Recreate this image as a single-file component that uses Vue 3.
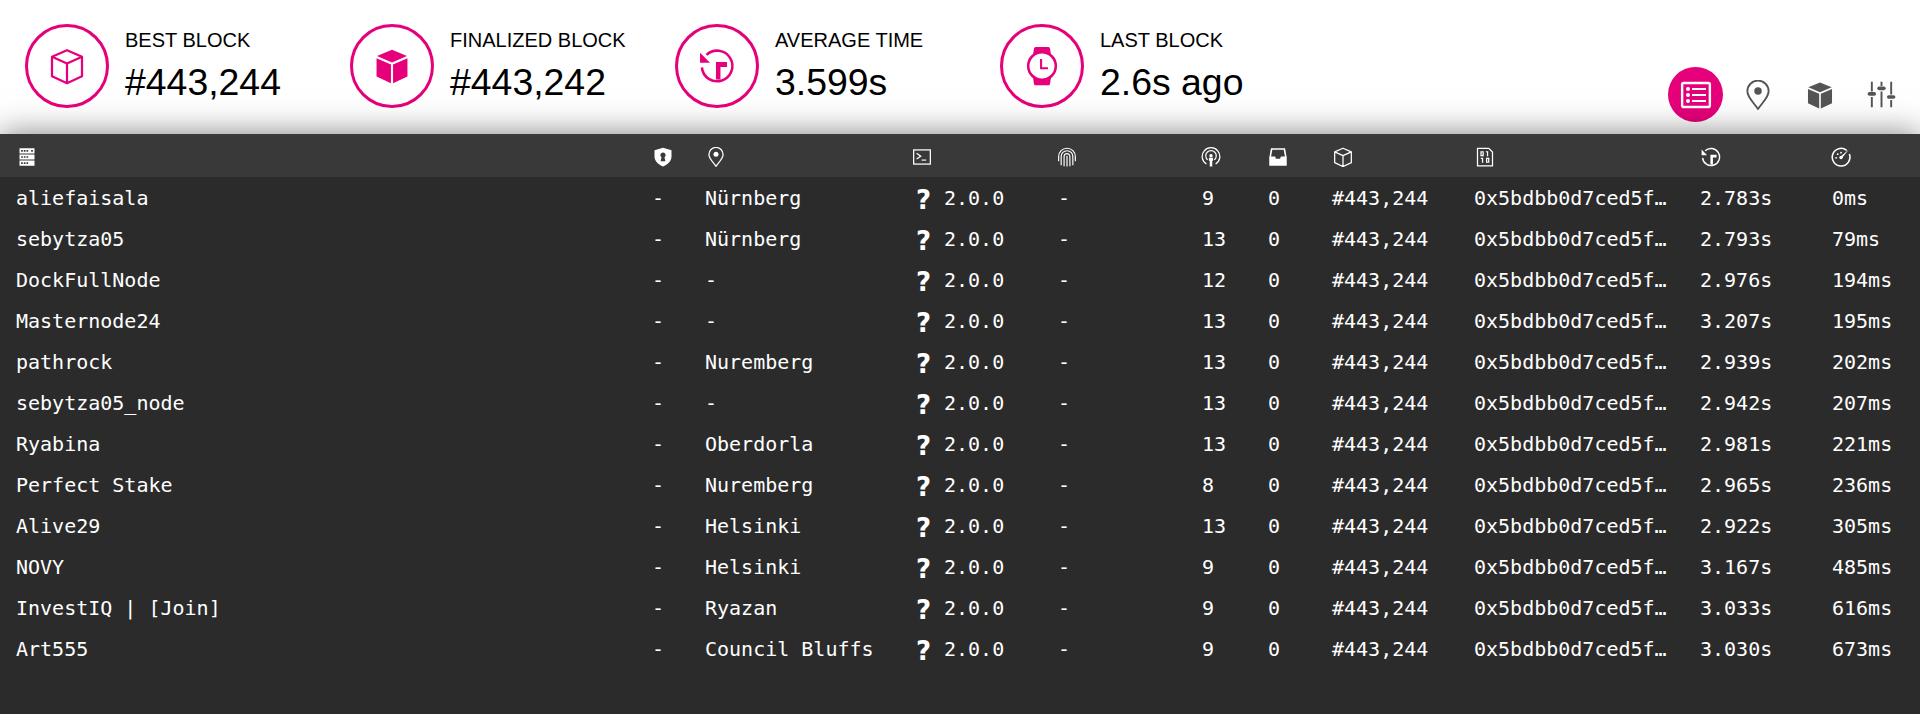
<script setup>
const icons = {
  cube: '<path d="M12 1.5 22 5.8V18.8L12 23.5 2 18.8V5.8ZM2 5.8 12 10.4 22 5.8M12 10.4V23.5" fill="none" stroke="currentColor" stroke-width="1.5" stroke-linejoin="round"/>',
  cubeSolid: '<path d="M12 1.2 22 5.4 12 9.7 2 5.4ZM1.7 6.8 11.3 11V23.5L1.7 19ZM22.3 6.8V19L12.7 23.5V11Z" fill="currentColor"/>',
  timer: '<path d="M5 4.6A10.2 10.2 0 1 1 1.9 13" fill="none" stroke="currentColor" stroke-width="1.7"/><path d="M0.7 3.1 7.3 9.8H0.7ZM11.3 9.3H18.7V12.6H14.3V21H11.3Z" fill="currentColor"/>',
  watch: '<path d="M7.7 -0.7H16.3C17 -0.7 17.3 0 17.4 0.6L18 4.6H6L6.6 0.6C6.7 0 7 -0.7 7.7 -0.7ZM6 19.4H18L17.4 23.6C17.3 24.2 17 24.9 16.3 24.9H7.7C7 24.9 6.7 24.2 6.6 23.6Z" fill="currentColor"/><circle cx="12" cy="12" r="9.2" fill="#fff" stroke="currentColor" stroke-width="1.7"/><path d="M10.7 7.3H12.1V12.9H16V14.2H10.7Z" fill="currentColor"/>',
  list: '<rect x="1.6" y="3" width="20.8" height="18" rx="1.2" fill="none" stroke="currentColor" stroke-width="1.8"/><circle cx="6" cy="7.5" r="1.5" fill="currentColor"/><circle cx="6" cy="12" r="1.5" fill="currentColor"/><circle cx="6" cy="16.5" r="1.5" fill="currentColor"/><path d="M9 6.7H19.5V8.3H9ZM9 11.2H19.5V12.8H9ZM9 15.7H19.5V17.3H9Z" fill="currentColor"/>',
  pin: '<path d="M12 23.2C8.5 18 3.5 14 3.5 9A8.5 8.5 0 0 1 20.5 9C20.5 14 15.5 18 12 23.2Z" fill="none" stroke="currentColor" stroke-width="1.5" stroke-linejoin="round"/><circle cx="12" cy="8.7" r="3" fill="currentColor"/>',
  sliders: '<path d="M4 1.5V9.5M4 14V22.5M12 1.5V5M12 9.5V22.5M20 1.5V12M20 16.5V22.5" stroke="currentColor" stroke-width="1.6"/><rect x="0.5" y="10" width="7" height="3" rx="1.5" fill="currentColor"/><rect x="8.5" y="5.4" width="7" height="3" rx="1.5" fill="currentColor"/><rect x="16.5" y="12.6" width="7" height="3" rx="1.5" fill="currentColor"/>',
  server: '<path d="M3 1.5H21V7.8H3ZM3 8.9H21V15.1H3ZM3 16.2H21V22.5H3Z" fill="currentColor"/><path d="M5 3.7H7V5.6H5ZM8.2 3.7H10.2V5.6H8.2ZM11.4 3.7H13.4V5.6H11.4ZM5 11H7V13H5ZM8.2 11H10.2V13H8.2ZM11.4 11H13.4V13H11.4ZM5 18.4H7V20.3H5ZM8.2 18.4H10.2V20.3H8.2ZM11.4 18.4H13.4V20.3H11.4ZM17 3.7H19V5.6H17Z" fill="#393939"/>',
  shield: '<path d="M12 0.8 22.2 4V11.5C22.2 17.2 17.5 21.2 12 23.4 6.5 21.2 1.8 17.2 1.8 11.5V4Z" fill="currentColor"/><path d="M12 6.5A3.2 3.2 0 0 1 13.8 12.3L14.8 17H9.2L10.2 12.3A3.2 3.2 0 0 1 12 6.5Z" fill="#393939"/>',
  terminal: '<rect x="2" y="3.5" width="20" height="17" fill="none" stroke="currentColor" stroke-width="1.5"/><path d="M5.5 7.5 10.5 11 5.5 14.5" fill="none" stroke="currentColor" stroke-width="1.5"/><path d="M11.5 15.7H17" stroke="currentColor" stroke-width="1.4"/>',
  finger: '<path d="M2 17V11.5A10 10 0 0 1 22 11.5V17M5 22V11.5A7 7 0 0 1 19 11.5V22M8.5 23V11.5A3.5 3.5 0 0 1 15.5 11.5V23M12 10.5V23.5" fill="none" stroke="currentColor" stroke-width="1.4"/>',
  broadcast: '<path d="M6.5 20.5A10.6 10.6 0 1 1 17.5 20.5" fill="none" stroke="currentColor" stroke-width="1.5"/><path d="M8 15.5A6.3 6.3 0 1 1 16 15.5" fill="none" stroke="currentColor" stroke-width="1.4"/><circle cx="12" cy="10.5" r="2" fill="currentColor"/><path d="M9.5 13H14.5V16.5H13.5V23.5H10.5V16.5H9.5Z" fill="currentColor"/>',
  inbox: '<path d="M3.5 1.5H20.5L22.5 13V22.5H1.5V13Z" fill="currentColor"/><path d="M5.2 3.4H18.8L20.3 11.5H15.5L14.5 14H9.5L8.5 11.5H3.7Z" fill="#393939"/>',
  binary: '<path d="M3 1.5H16.5L21 6V22.5H3Z" fill="none" stroke="currentColor" stroke-width="1.5"/><path d="M6.5 5H10.5V11H6.5ZM8 6.4V9.6H9V6.4ZM13 5H15.8V11H14.3V6.4H13ZM7 13H9.8V19H8.3V14.4H7ZM13.2 13H17.2V19H13.2ZM14.7 14.4V17.6H15.7V14.4Z" fill="currentColor" fill-rule="evenodd"/>',
  gauge: '<path d="M18.8 4A10.6 10.6 0 1 0 22 8.4" fill="none" stroke="currentColor" stroke-width="1.9"/><path d="M21.5 3 11.5 11.3 13.2 13.2Z" fill="currentColor"/><circle cx="12" cy="12.6" r="2" fill="currentColor"/><circle cx="6.2" cy="13" r="1.1" fill="currentColor"/><circle cx="8" cy="8.6" r="1.1" fill="currentColor"/><circle cx="12" cy="6.8" r="1.1" fill="currentColor"/>'
}

const tiles = [
  { label: 'BEST BLOCK', value: '#443,244', icon: 'cube' },
  { label: 'FINALIZED BLOCK', value: '#443,242', icon: 'cubeSolid' },
  { label: 'AVERAGE TIME', value: '3.599s', icon: 'timer' },
  { label: 'LAST BLOCK', value: '2.6s ago', icon: 'watch' }
]

const tabs = [
  { icon: 'list', size: 32 },
  { icon: 'pin', size: 30 },
  { icon: 'cubeSolid', size: 28 },
  { icon: 'sliders', size: 29 }
]

// dx nudges an icon that sits a little right of its column's text
const columns = [
  { icon: 'server', width: 635, dx: 1 },
  { icon: 'shield', width: 53, dx: 2 },
  { icon: 'pin', width: 208, dx: 2 },
  { icon: 'terminal', width: 145, dx: 0 },
  { icon: 'finger', width: 144, dx: 0 },
  { icon: 'broadcast', width: 66, dx: 0 },
  { icon: 'inbox', width: 64, dx: 1 },
  { icon: 'cube', width: 142, dx: 2 },
  { icon: 'binary', width: 226, dx: 2 },
  { icon: 'timer', width: 132, dx: 2 },
  { icon: 'gauge', width: 105, dx: 0 }
]

const nodes = [
  ['aliefaisala', 'Nürnberg', 9, '2.783s', '0ms'],
  ['sebytza05', 'Nürnberg', 13, '2.793s', '79ms'],
  ['DockFullNode', '-', 12, '2.976s', '194ms'],
  ['Masternode24', '-', 13, '3.207s', '195ms'],
  ['pathrock', 'Nuremberg', 13, '2.939s', '202ms'],
  ['sebytza05_node', '-', 13, '2.942s', '207ms'],
  ['Ryabina', 'Oberdorla', 13, '2.981s', '221ms'],
  ['Perfect Stake', 'Nuremberg', 8, '2.965s', '236ms'],
  ['Alive29', 'Helsinki', 13, '2.922s', '305ms'],
  ['NOVY', 'Helsinki', 9, '3.167s', '485ms'],
  ['InvestIQ | [Join]', 'Ryazan', 9, '3.033s', '616ms'],
  ['Art555', 'Council Bluffs', 9, '3.030s', '673ms']
]
</script>

<template>
  <div class="page">
    <header class="top">
      <div v-for="tile in tiles" :key="tile.label" class="tile">
        <div class="tile-icon">
          <svg viewBox="0 0 24 24" width="36" height="36" v-html="icons[tile.icon]"></svg>
        </div>
        <div class="tile-text">
          <div class="tile-label">{{ tile.label }}</div>
          <div class="tile-value">{{ tile.value }}</div>
        </div>
      </div>
      <nav class="tabs">
        <div v-for="(tab, i) in tabs" :key="tab.icon" class="tab" :class="{ active: i === 0 }">
          <svg viewBox="0 0 24 24" :width="tab.size" :height="tab.size" v-html="icons[tab.icon]"></svg>
        </div>
      </nav>
    </header>

    <div class="list">
      <table>
        <colgroup>
          <col v-for="col in columns" :key="col.icon" :style="{ width: col.width + 'px' }" />
        </colgroup>
        <thead>
          <tr>
            <th v-for="col in columns" :key="col.icon">
              <svg viewBox="0 0 24 24" width="20" height="20" :style="{ marginLeft: col.dx + 'px' }" v-html="icons[col.icon]"></svg>
            </th>
          </tr>
        </thead>
        <tbody>
          <tr v-for="node in nodes" :key="node[0]">
            <td>{{ node[0] }}</td>
            <td>-</td>
            <td>{{ node[1] }}</td>
            <td><span class="impl">?</span>2.0.0</td>
            <td>-</td>
            <td>{{ node[2] }}</td>
            <td>0</td>
            <td>#443,244</td>
            <td>0x5bdbb0d7ced5f…</td>
            <td>{{ node[3] }}</td>
            <td>{{ node[4] }}</td>
          </tr>
        </tbody>
      </table>
    </div>
  </div>
</template>

<style>
body {
  background: #fff;
}
</style>

<style scoped>
.page {
  display: flex;
  flex-direction: column;
  height: 714px;
  overflow: hidden;
  font-family: "Liberation Sans", Arial, sans-serif;
}

.top {
  display: flex;
  height: 134px;
  flex: none;
  padding-left: 25px;
  box-sizing: border-box;
}

.tile {
  display: flex;
  width: 325px;
  padding-top: 24px;
  box-sizing: border-box;
}

.tile-icon {
  display: flex;
  align-items: center;
  justify-content: center;
  width: 84px;
  height: 84px;
  box-sizing: border-box;
  border: 3px solid #e6007a;
  border-radius: 50%;
  color: #e6007a;
}

.tile-icon svg {
  overflow: visible;
}

.tile-text {
  margin-left: 16px;
  color: #000;
}

.tile-label {
  margin-top: 6px;
  font-size: 20px;
  line-height: 20px;
}

.tile-value {
  margin-top: 10px;
  font-size: 37.4px;
  line-height: 44px;
}

.tabs {
  display: flex;
  align-items: center;
  margin-left: auto;
  align-self: flex-end;
  margin-right: 11px;
  margin-bottom: 12px;
  gap: 7px;
}

.tab {
  display: flex;
  align-items: center;
  justify-content: center;
  width: 55px;
  height: 55px;
  border-radius: 50%;
  color: #555;
}

.tab.active {
  background: #e6007a;
  color: #fff;
}

.list {
  flex: 1;
  background: #2b2b2b;
  box-shadow: 0 0 30px rgba(0, 0, 0, 0.5);
  position: relative;
}

table {
  width: 1920px;
  table-layout: fixed;
  border-collapse: collapse;
  color: #fff;
  font-family: "DejaVu Sans Mono", monospace;
  font-size: 20px;
}

thead tr {
  height: 43px;
  background: #393939;
}

th {
  padding: 3px 0 0 16px;
  text-align: left;
}

th svg {
  display: block;
}

tbody tr {
  height: 41px;
}

td {
  padding: 1px 0 0 17px;
  white-space: nowrap;
}

td:first-child {
  padding-left: 16px;
}

.impl {
  display: inline-block;
  width: 31px;
  padding-left: 3px;
  box-sizing: border-box;
  font-family: "DejaVu Sans", sans-serif;
  font-weight: 700;
  font-size: 26px;
  line-height: 18px;
  vertical-align: -4px;
}
</style>
